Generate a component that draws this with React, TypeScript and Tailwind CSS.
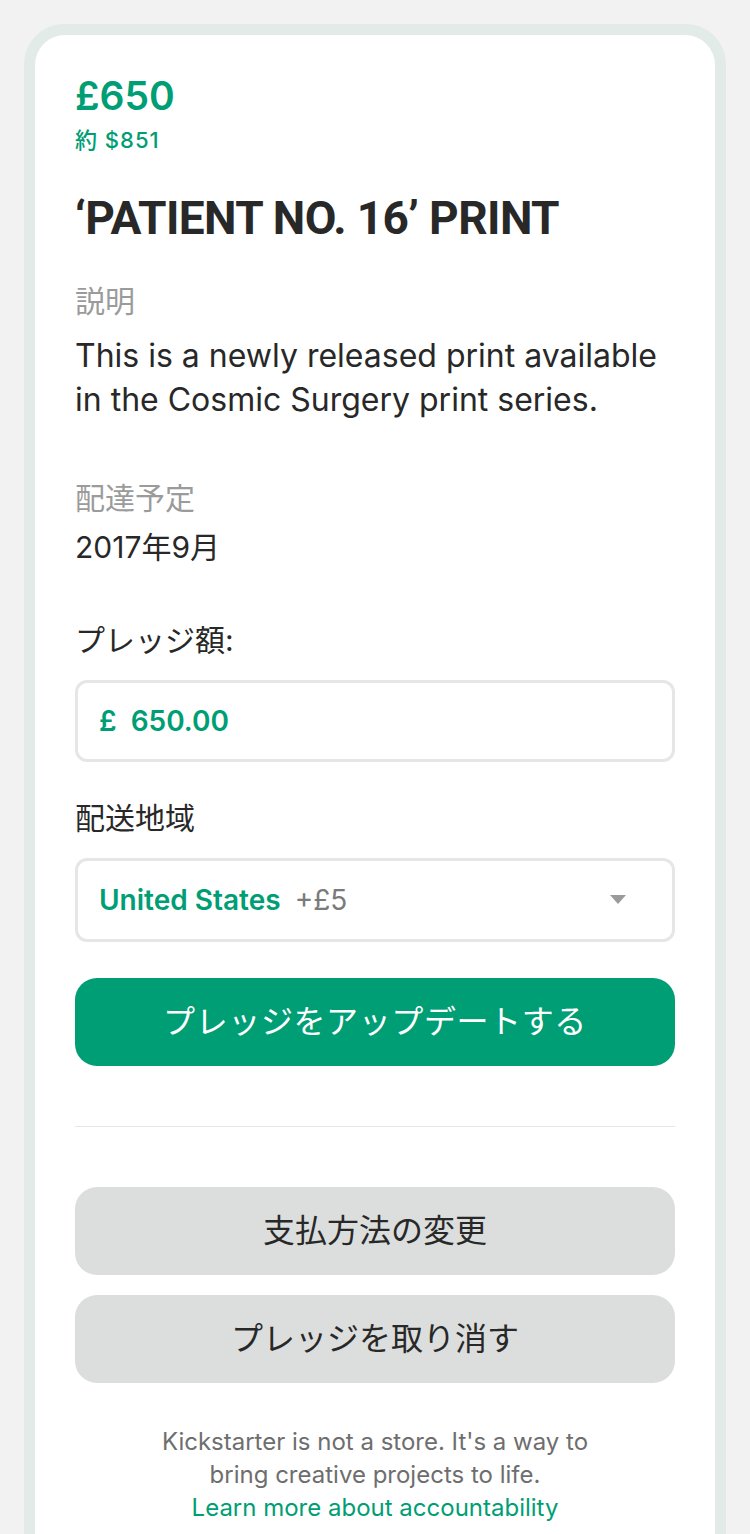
import React from "react";

const font = "font-['Inter','Noto_Sans_CJK_JP',sans-serif]";

const Label = ({ children, muted }: { children: React.ReactNode; muted?: boolean }) => (
    <div className={`${muted ? "text-[#9b9b9b]" : "text-[#282828]"} text-[30px] leading-[42px]`}>{children}</div>
);

export default function App() {
    return (
        <div className={`min-h-[1534px] bg-[#f2f2f2] px-6 pt-6 ${font}`}>
            <div className="rounded-t-[40px] bg-[#e3ebe9] px-[11px] pt-[11px]">
                <div className="rounded-t-[30px] bg-white px-10 pt-[38px] pb-10">
                    <div className="text-[39px] leading-[46px] font-semibold text-[#009e74]">£650</div>
                    <div className="mt-[7px] text-[22px] leading-[28px] font-medium text-[#009e74] tracking-[1px]">約 $851</div>

                    <h1 className="mt-[38px] text-[46px] leading-[52px] font-bold text-[#282828] font-['Roboto','Noto_Sans_CJK_JP',sans-serif] tracking-[-0.6px]">
                        ‘PATIENT NO. 16’ PRINT
                    </h1>

                    <div className="mt-[36px]">
                        <Label muted>説明</Label>
                        <p className="mt-[12px] text-[32px] leading-[44px] text-[#282828]">
                            This is a newly released print available in the Cosmic Surgery print series.
                        </p>
                    </div>

                    <div className="mt-[55px]">
                        <Label muted>配達予定</Label>
                        <div className="mt-[7px] text-[30px] leading-[42px] text-[#282828]">2017年9月</div>
                    </div>

                    <div className="mt-[51px]">
                        <Label>プレッジ額:</Label>
                        <div className="mt-[19px] h-[82px] rounded-[12px] border-[3px] border-[#e6e6e6] flex items-center px-[21px] gap-[14px] text-[28px] font-semibold text-[#009e74]">
                            <span>£</span>
                            <span>650.00</span>
                        </div>
                    </div>

                    <div className="mt-[35px]">
                        <Label>配送地域</Label>
                        <div className="mt-[19px] h-[84px] rounded-[12px] border-[3px] border-[#e6e6e6] flex items-center px-[21px] text-[28px]">
                            <span className="font-semibold text-[#009e74]">United States</span>
                            <span className="ml-[14px] text-[#7a7a7a]">+£5</span>
                            <svg className="ml-auto mr-[25px]" width="16" height="10" viewBox="0 0 16 10">
                                <path d="M0 0 L16 0 L8 9 Z" fill="#9b9b9b" />
                            </svg>
                        </div>
                    </div>

                    <button className="mt-[36px] w-full h-[88px] rounded-[22px] bg-[#009e74] text-white text-[32px] tracking-[0.6px]">
                        プレッジをアップデートする
                    </button>

                    <div className="mt-[60px] border-t border-[#e6e6e6]" />

                    <div className="mt-[60px] flex flex-col gap-[20px]">
                        <button className="w-full h-[88px] rounded-[22px] bg-[#dcdedd] text-[#282828] text-[32px]">支払方法の変更</button>
                        <button className="w-full h-[88px] rounded-[22px] bg-[#dcdedd] text-[#282828] text-[32px]">プレッジを取り消す</button>
                    </div>

                    <div className="mt-[42px] text-center text-[24px] leading-[33px] text-[#6e6e6e] px-[80px]">
                        <p>Kickstarter is not a store. It's a way to bring creative projects to life.</p>
                        <a className="text-[#009e74]" href="#">Learn more about accountability</a>
                    </div>
                </div>
            </div>
        </div>
    );
}
